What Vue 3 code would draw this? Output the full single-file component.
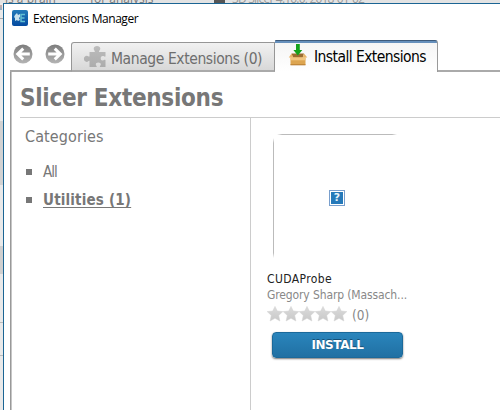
<script setup>
const categories = [
  { label: 'All', active: false },
  { label: 'Utilities (1)', active: true },
]
const star = 'M8 .4 10.3 5 15.8 5.600 11.700 9.400 12.900 15 8 12.200 3.100 15 4.300 9.400 .2 5.600 5.700 5Z'
</script>

<template>
  <div class="screen">
    <div class="backdrop-top"><span class="bt1">is a brain</span><span class="bt2">for analysis</span><i class="bicon"></i><span class="bt3">3D Slicer 4.10.0, 2018-01-02</span></div>
    <div class="body">
      <div class="backdrop-left"><i class="l0"></i><i class="l1"></i><i class="b1"></i><i class="b2"></i><i class="l3"></i><i class="l4"></i></div>
      <main class="window">
        <header class="title">
          <svg width="16" height="16" viewBox="0 0 16 16">
            <defs><linearGradient id="logo-blue" x2="0" y2="1"><stop stop-color="#247bb9" /><stop offset="1" stop-color="#044aa0" /></linearGradient></defs>
            <rect width="16" height="16" rx="2" fill="url(#logo-blue)" />
            <path d="M3 5l2-2 1 2 2-1v3l-1 1 1 2-2 1-1-1-2 1V8L2 7z" fill="#c8e2ed" />
            <path d="M13 4.500H9v7h4M9 8h3.500" fill="none" stroke="#62bfd2" stroke-width="1.500" />
          </svg>
          <span>Extensions Manager</span>
        </header>
        <nav class="toolbar">
          <svg v-for="dir in ['back', 'forward']" :key="dir" class="arrow" :class="dir" width="20" height="20" viewBox="0 0 20 20">
            <defs><linearGradient id="ring" x2="0" y2="1"><stop stop-color="#7d7d7d" /><stop offset="1" stop-color="#b4b4b4" /></linearGradient></defs>
            <circle cx="10" cy="10" r="9.500" fill="url(#ring)" />
            <path d="M2.600 10 9.200 3.600 11.300 5.700 8.400 8.500H16.800V11.500H8.400L11.300 14.300 9.200 16.400Z" fill="#fff" />
          </svg>
          <div class="tab manage">
            <svg width="24" height="24" viewBox="0 0 24 24">
              <defs><linearGradient id="puz" x2="0" y2="1"><stop stop-color="#bcbcbc" /><stop offset="1" stop-color="#acacac" /></linearGradient></defs>
              <path d="M6.500 7h5.200c.6-1-1-1.500-1-3.200C10.700 2 12.200 1 14 1s3.300 1 3.300 2.800c0 1.700-1.800 2.200-1.200 3.200h6.400v4.500c-1 .5-1.500-.6-2.800-.6-1.400 0-2 1-2 2.300s.6 2.300 2 2.300c1.300 0 1.800-1.100 2.800-.6V22h-5.500c-.6-1 .8-1.500.8-2.500 0-1.200-1-1.900-2.500-1.900s-2.500.7-2.500 1.900c0 1 1.400 1.500.8 2.500H6.500v-6c-.8-.6-1.300.9-2.700.9-1.700 0-2.900-1.300-2.900-3.100s1.200-3.100 2.900-3.100c1.400 0 1.900 1.300 2.700.7z" fill="url(#puz)" />
            </svg>
            <span>Manage Extensions (0)</span>
          </div>
          <div class="tab install">
            <svg width="20" height="24" viewBox="0 0 20 24">
              <path d="M3.500 10.500H16L14.500 15H5z" fill="#9b6c30" />
              <path d="M3.500 10.500 5.300 14.500H.8zM16 10.500l3.300 4h-4.500z" fill="#e8b568" />
              <path d="M2.500 14.500h15v7.500h-15z" fill="#dda550" /><path d="M2.500 14.300h15v3h-15z" fill="#f0c680" />
              <path d="M2.500 21.300h15v1h-15z" fill="#b77b30" />
              <path d="M8 1h3.800v6h2.500L9.800 12.500 5.400 7H8z" fill="#14a21b" />
            </svg>
            <span>Install Extensions</span>
          </div>
          <i class="rest"></i>
        </nav>
        <section class="page">
          <h1><span>Slicer Extensions</span></h1>
          <div class="columns">
            <aside>
              <h2><span>Categories</span></h2>
              <ul><li v-for="c in categories" :key="c.label" :class="{ active: c.active }"><span>{{ c.label }}</span></li></ul>
            </aside>
            <article>
              <div class="thumb">
                <i class="edge-top"></i><i class="edge-left"></i>
                <div class="missing"><b>?</b></div>
              </div>
              <div class="name"><span>CUDAProbe</span></div>
              <div class="author"><span>Gregory Sharp (Massach...</span></div>
              <div class="rating">
                <svg v-for="n in 5" :key="n" width="16" height="16" viewBox="0 0 16 16"><defs><linearGradient id="star" x2="0" y2="1"><stop stop-color="#dcdcdc" /><stop offset="1" stop-color="#c8c8c8" /></linearGradient></defs><path :d="star" fill="url(#star)" stroke="#d2d2d2" stroke-width=".5" /></svg>
                <span>(0)</span>
              </div>
              <button><span>INSTALL</span></button>
            </article>
          </div>
        </section>
      </main>
    </div>
  </div>
</template>

<style>
body { margin: 0; overflow: hidden; background: #fff; }
</style>
<style scoped>
* { box-sizing: border-box; }
.screen { width: 500px; height: 410px; overflow: hidden; font-family: "DejaVu Sans Condensed", "DejaVu Sans", sans-serif; font-stretch: condensed; color: #777; }
span { white-space: nowrap; }
svg { display: block; flex: none; }
h1, h2, ul { margin: 0; padding: 0; }
.backdrop-top { height: 3px; background: #e3e3e3; overflow: hidden; display: flex; align-items: flex-end; padding-left: 5px; font: 12px/12px "Open Sans", sans-serif; color: #777; }
.backdrop-top span { height: 12px; margin-bottom: -2px; }
.bt1 { width: 85px; }
.bt2 { width: 124px; }
.bt3 { letter-spacing: -.8px; color: #999; }
.bicon { width: 11px; height: 3px; background: #555; margin-right: 7px; }
.body { display: flex; height: 407px; }
.backdrop-left { width: 3px; background: #e9e9e9; display: flex; flex-direction: column; }
.l0 { height: 5px; margin-top: 2px; width: 2px; background: linear-gradient(#d0a9a0, #8eb0c8); }
.l1 { margin-top: 8px; height: 1px; background: #aaa; }
.b1 { margin-top: 102px; height: 64px; background: #d2d2d2; }
.b2 { margin-top: 61px; height: 28px; background: #cfcfcf; }
.l3 { margin-top: 48px; height: 1px; background: #bbb; }
.l4 { margin-top: 32px; height: 1px; background: #bbb; }
.window { width: 497px; border: 1px solid #1b6594; border-width: 1px 0 0 1px; background: #fff; }
.title { height: 32px; display: flex; padding: 6px 0 0 8px; gap: 5px; color: #000; font: 12px/18px "Open Sans", sans-serif; letter-spacing: -.44px; }
.toolbar { height: 36px; display: flex; align-items: flex-end; margin-left: 6px; background: linear-gradient(#a6a6a6, #a6a6a6) 0 100% / 61px 2px no-repeat; }
.arrow { margin: 0 0 8px 3px; }
.forward { transform: scaleX(-1); margin-left: 12px; margin-right: 6px; }
.tab { display: flex; font-size: 15.5px; line-height: 20px; }
.manage { width: 204px; height: 30px; border: 1px solid #969696; border-bottom: 2px solid #aaa; border-radius: 3px 0 0; background: linear-gradient(#f1f1f1, #d8d8d8); padding: 2px 0 0 11px; gap: 4px; color: #6e6e6e; letter-spacing: -.41px; }
.manage span { padding-top: 4px; }
.install { width: 163px; height: 32px; border-top: 1px solid #3d5a7b; border-right: 1px solid #999; border-radius: 1px 3px 0 0; background: linear-gradient(#6690bc 0 2px, #f5f5f5 2px, #fff); padding: 2px 0 0 13px; gap: 6px; color: #000; letter-spacing: -.56px; }
.install span { padding-top: 4px; }
.rest { flex: 1; height: 2px; background: #aaa; }
.page { margin-left: 6px; border-left: 1px solid #999; box-shadow: inset 1px 0 #c6c6c6; padding-left: 1px; height: 338px; }
h1 { height: 46px; border-bottom: 1px solid #ccc; margin-left: 8px; font-size: 24px; line-height: 30px; padding-top: 11px; letter-spacing: -.3px; }
.columns { display: flex; margin-left: 8px; height: 292px; }
aside { width: 231px; border-right: 1px solid #ccc; padding-left: 5px; }
h2 { font-size: 16px; font-weight: 400; line-height: 20px; padding-top: 9px; height: 40px; letter-spacing: .1px; }
ul { list-style: none; }
li { height: 28px; display: flex; align-items: center; font-size: 15px; line-height: 20px; letter-spacing: -1px; }
li::before { content: ""; width: 6px; height: 6px; background: #777; margin: 0 11px 0 1px; }
.active { font-weight: 700; letter-spacing: .17px; }
.active span { text-decoration: underline; text-decoration-thickness: 1px; text-underline-offset: 2px; }
article { padding: 16px 0 0 16px; }
.thumb { position: relative; width: 140px; height: 136px; padding: 56px 0 0 62px; }
.edge-top { position: absolute; left: 10px; top: 0; width: 120px; height: 1px; background: linear-gradient(90deg, #fff, #bbb 5px calc(100% - 5px), #fff); }
.edge-left { position: absolute; left: 6px; top: 4px; width: 1px; height: 120px; background: linear-gradient(#fff, #bbb 5px calc(100% - 5px), #fff); }
.missing { width: 16px; height: 16px; border: 1px solid #799fcd; padding: 1px; background: #fff; }
.missing b { display: block; width: 12px; height: 12px; background: #2579b9; color: #e7f3fa; text-align: center; font: 700 11px/12px "DejaVu Sans", sans-serif; }
.name { font-size: 12px; line-height: 18px; height: 17px; color: #222; letter-spacing: .4px; }
.author { font-size: 12px; line-height: 16px; height: 18px; color: #888; letter-spacing: -.12px; }
.rating { display: flex; height: 25px; font-size: 13.5px; line-height: 20px; color: #888; }
.rating svg { margin-top: 1px; }
.rating span { margin-left: 5px; }
button { display: block; width: 131px; height: 26px; margin: 2px 0 0 5px; padding: 0; border: 1px solid #1b699a; border-radius: 4px; background: linear-gradient(#2a85bc, #2070a3); box-shadow: 0 1px 2px #777; color: #fff; font: 700 12px/22px "DejaVu Sans", sans-serif; letter-spacing: -.4px; text-shadow: 0 -1px #164f76; }
</style>
